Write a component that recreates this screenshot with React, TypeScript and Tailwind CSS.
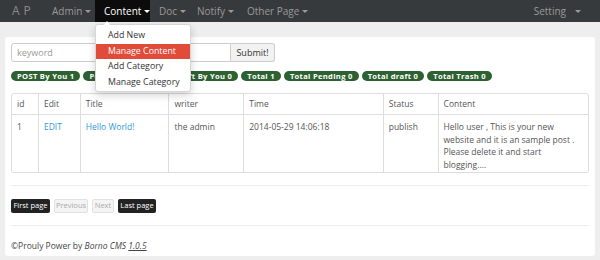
import React from 'react';

const Caret = () => (
  <span className="inline-block w-0 h-0 ml-[3px] align-middle border-x-[3px] border-x-transparent border-t-[3px] border-t-current" />
);

const navItems = [
  { label: 'Admin', w: 'w-[52px]' },
  { label: 'Content', w: 'w-[55px]', active: true },
  { label: 'Doc', w: 'w-[38px]' },
  { label: 'Notify', w: 'w-[50px]' },
  { label: 'Other Page', w: 'w-[67px]' },
];

const badges = [
  'POST By You 1',
  'Pending By You 0',
  'Draft By You 0',
  'Total 1',
  'Total Pending 0',
  'Total draft 0',
  'Total Trash 0',
];

const cols = [
  { label: 'id', w: 'w-[26px]' },
  { label: 'Edit', w: 'w-[42px]' },
  { label: 'Title', w: 'w-[89px]' },
  { label: 'writer', w: 'w-[75px]' },
  { label: 'Time', w: 'w-[140px]' },
  { label: 'Status', w: 'w-[55px]' },
  { label: 'Content', w: 'w-[151px]' },
];

const menu = ['Add New', 'Manage Content', 'Add Category', 'Manage Category'];

export default function App() {
  return (
    <div className="relative w-[600px] h-[260px] overflow-hidden bg-[#eeeeee] font-['Open_Sans',sans-serif] text-[#555]">
      {/* Navbar */}
      <div className="flex items-stretch h-[22px] bg-[#373a3c] text-[10px] text-[#999]">
        <div className="w-[43px] pl-[12px] flex items-center text-[12px] tracking-[4px] text-[#8a8a8a]">AP</div>
        {navItems.map((item) => (
          <div
            key={item.label}
            className={`${item.w} pl-[9px] flex items-center whitespace-nowrap ${
              item.active ? 'bg-[#0c0c0c] text-white' : ''
            }`}
          >
            {item.label}
            <Caret />
          </div>
        ))}
        <div className="flex-1" />
        <div className="pr-[19px] flex items-center">
          Setting
          <span className="ml-[6px]"><Caret /></span>
        </div>
      </div>

      {/* Main panel */}
      <div className="mx-[5px] mt-[15px] h-[219px] bg-white rounded-[3px] px-[6px] pt-[6px]">
        <div className="flex h-[19px] text-[9px]">
          <div className="w-[220px] border border-[#ccc] rounded-l-[3px] flex items-center pl-[5px] text-[#999]">keyword</div>
          <div className="w-[44px] border border-l-0 border-[#ccc] rounded-r-[3px] bg-[#f2f2f2] flex items-center justify-center text-[#333]">
            Submit!
          </div>
        </div>

        <div className="flex gap-[3px] mt-[9px]">
          {badges.map((b) => (
            <span
              key={b}
              className="h-[10px] px-[6px] rounded-full bg-[#2e6132] text-white text-[7.6px] font-bold leading-[10px] whitespace-nowrap tracking-[0.3px]"
            >
              {b}
            </span>
          ))}
        </div>

        {/* Table */}
        <div className="mt-[12px] w-[578px] border border-[#ddd] rounded-[3px] text-[8.5px]">
          <div className="flex h-[21px] border-b border-[#ddd]">
            {cols.map((c, i) => (
              <div
                key={c.label}
                className={`${c.w} pl-[5px] flex items-center ${i > 0 ? 'border-l border-[#ddd]' : ''}`}
              >
                {c.label}
              </div>
            ))}
          </div>
          <div className="flex h-[57px] leading-[12.5px]">
            <div className="w-[26px] pl-[5px] pt-[6px]">1</div>
            <div className="w-[42px] pl-[5px] pt-[6px] border-l border-[#ddd] text-[#2f9ad6]">EDIT</div>
            <div className="w-[89px] pl-[5px] pt-[6px] border-l border-[#ddd] text-[#2f9ad6]">Hello World!</div>
            <div className="w-[75px] pl-[5px] pt-[6px] border-l border-[#ddd]">the admin</div>
            <div className="w-[140px] pl-[5px] pt-[6px] border-l border-[#ddd]">2014-05-29 14:06:18</div>
            <div className="w-[55px] pl-[5px] pt-[6px] border-l border-[#ddd]">publish</div>
            <div className="w-[151px] pl-[5px] pr-[8px] pt-[6px] border-l border-[#ddd]">
              Hello user , This is your new website and it is an sample post . Please delete it and start blogging....
            </div>
          </div>
        </div>

        <div className="mt-[12px] border-t border-[#eee]" />

        <div className="flex gap-[4px] mt-[13px] text-[7.5px]">
          <span className="w-[39px] h-[14px] rounded-[2px] bg-[#222] text-white flex items-center justify-center">First page</span>
          <span className="w-[34px] h-[14px] rounded-[2px] bg-[#f4f4f4] border border-[#e2e2e2] text-[#aaa] flex items-center justify-center">Previous</span>
          <span className="w-[22px] h-[14px] rounded-[2px] bg-[#f4f4f4] border border-[#e2e2e2] text-[#aaa] flex items-center justify-center">Next</span>
          <span className="w-[38px] h-[14px] rounded-[2px] bg-[#222] text-white flex items-center justify-center">Last page</span>
        </div>

        <div className="mt-[12px] border-t border-[#eee]" />

        <div className="mt-[14px] text-[8.5px] text-[#444]">
          ©Prouly Power by <i>Borno CMS</i> <i className="underline">1.0.5</i>
        </div>
      </div>

      {/* Dropdown */}
      <div className="absolute left-[95px] top-[24px] w-[96px] h-[68px] bg-white border border-[#d6d6d6] rounded-[3px] shadow-[0_3px_8px_rgba(0,0,0,0.18)] pt-[3px] text-[8.8px] text-[#333]">
        <span className="absolute -top-[4px] left-[8px] w-0 h-0 border-x-[3px] border-x-transparent border-b-[4px] border-b-white" />
        {menu.map((m, i) => (
          <div
            key={m}
            className={`h-[15.5px] pl-[12px] flex items-center whitespace-nowrap ${
              i === 1 ? 'bg-[#e04b3a] text-white' : ''
            }`}
          >
            {m}
          </div>
        ))}
      </div>
    </div>
  );
}
